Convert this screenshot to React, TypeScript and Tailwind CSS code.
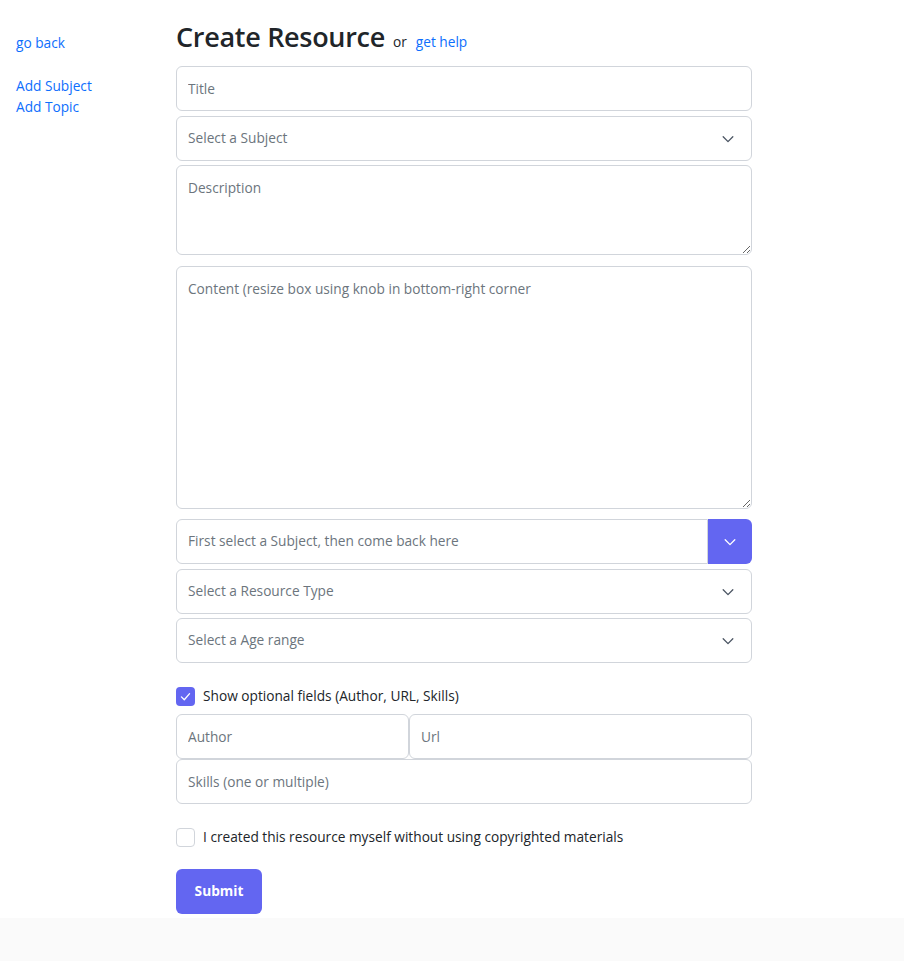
import React from "react";

const Chevron = ({ color = "#4b5563" }: { color?: string }) => (
  <svg width="14" height="14" viewBox="0 0 16 16" fill="none">
    <path d="M2.5 5.5 8 11l5.5-5.5" stroke={color} strokeWidth="1.5" strokeLinecap="round" strokeLinejoin="round" />
  </svg>
);

const baseInput =
  "block min-w-0 h-[45px] px-[11px] rounded-[6px] border border-[#d1d5db] bg-white text-[13.7px] text-[#212529] placeholder:text-[#6c757d] outline-none";

const SelectBox = ({ label }: { label: string }) => (
  <div className="flex items-center justify-between h-[45px] px-[11px] rounded-[6px] border border-[#d1d5db] bg-white">
    <span className="text-[13.7px] text-[#6c757d]">{label}</span>
    <span className="mr-[5px] flex"><Chevron /></span>
  </div>
);

export default function App() {
  return (
    <div className="min-h-[961px] bg-[#fafafa]" style={{ fontFamily: '"Open Sans", "Noto Sans", sans-serif' }}>
      <div className="bg-white flex h-[918px]">
        <aside className="w-[176px] pl-4 pt-[32px] text-[13.7px] text-[#0d6efd] flex flex-col">
          <a className="leading-[21px]">go back</a>
          <div className="h-[22px]" />
          <a className="leading-[21px]">Add Subject</a>
          <a className="leading-[21px]">Add Topic</a>
        </aside>
        <main className="w-[576px] pt-[18px]">
          <div className="flex items-baseline gap-2 h-[48px]">
            <h1 className="text-[27px] font-semibold text-[#212529] leading-[38px] tracking-[-0.3px]">Create Resource</h1>
            <span className="text-[13.7px] text-[#212529]">or</span>
            <a className="text-[13.7px] text-[#0d6efd] ml-[1px]">get help</a>
          </div>
          <div className="flex flex-col">
            <input className={baseInput + " w-full"} placeholder="Title" />
            <div className="h-[5px]" />
            <SelectBox label="Select a Subject" />
            <div className="h-[4px]" />
            <textarea
              className="block w-full h-[90px] px-[11px] pt-[12px] rounded-[6px] border border-[#d1d5db] bg-white text-[13.7px] placeholder:text-[#6c757d] outline-none"
              placeholder="Description"
            />
            <div className="h-[11px]" />
            <textarea
              className="block w-full h-[243px] px-[11px] pt-[12px] rounded-[6px] border border-[#d1d5db] bg-white text-[13.7px] placeholder:text-[#6c757d] outline-none"
              placeholder="Content (resize box using knob in bottom-right corner"
            />
            <div className="h-[10px]" />
            <div className="flex h-[45px]">
              <div className="flex-1 flex items-center px-[11px] rounded-l-[6px] border border-[#d1d5db] bg-white">
                <span className="text-[13.7px] text-[#6c757d]">First select a Subject, then come back here</span>
              </div>
              <div className="w-[44px] flex items-center justify-center rounded-r-[6px] bg-[#6366f1]">
                <Chevron color="#ffffff" />
              </div>
            </div>
            <div className="h-[5px]" />
            <SelectBox label="Select a Resource Type" />
            <div className="h-[4px]" />
            <SelectBox label="Select a Age range" />
          </div>
          <label className="flex items-center gap-[8px] mt-[22px] h-[22px]">
            <span className="w-[19px] h-[19px] rounded-[4px] bg-[#6366f1] flex items-center justify-center">
              <svg width="13" height="13" viewBox="0 0 16 16" fill="none">
                <path d="M3 8.5 6.5 12 13 4.5" stroke="#fff" strokeWidth="1.6" strokeLinecap="round" strokeLinejoin="round" />
              </svg>
            </span>
            <span className="text-[13.7px] text-[#212529]">Show optional fields (Author, URL, Skills)</span>
          </label>
          <div className="mt-[7px] flex">
            <input className={baseInput + " w-[233px] flex-none"} placeholder="Author" />
            <input className={baseInput + " flex-1"} placeholder="Url" />
          </div>
          <input className={baseInput + " w-full"} placeholder="Skills (one or multiple)" />
          <label className="flex items-center gap-[8px] mt-[22px] h-[22px]">
            <span className="w-[19px] h-[19px] rounded-[4px] border border-[#d1d5db] bg-white" />
            <span className="text-[13.7px] text-[#212529]">I created this resource myself without using copyrighted materials</span>
          </label>
          <button className="mt-[21px] w-[86px] h-[45px] rounded-[6px] bg-[#6366f1] text-white text-[13.7px] font-bold">
            Submit
          </button>
        </main>
      </div>
    </div>
  );
}
